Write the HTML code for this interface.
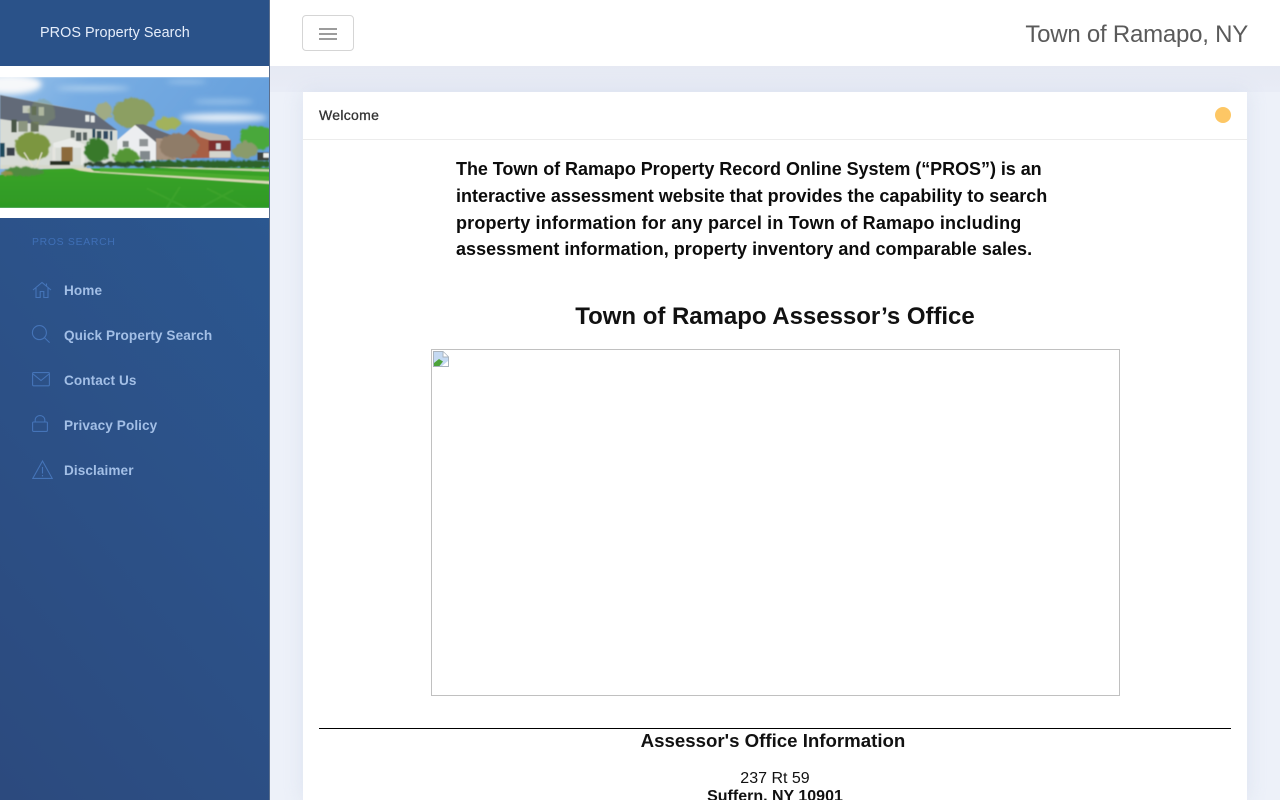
<!DOCTYPE html>
<html lang="en">
<head>
<meta charset="utf-8">
<title>PROS Property Search</title>
<style>
*{box-sizing:border-box}
html,body{margin:0;padding:0;width:1280px;height:800px;overflow:hidden;background:#edf1f9;font-family:"Liberation Sans",sans-serif}
#wrap{position:relative;width:1280px;height:800px;overflow:hidden}
.abs{position:absolute;white-space:nowrap}
#side{position:absolute;left:0;top:0;width:270px;height:800px;background:linear-gradient(50deg,#2c4a7e 0%,#2b5a94 100%);border-right:1px solid #5b6f8d}
#head{position:absolute;left:0;top:0;width:269px;height:66px;background:#2a5289}
#band{position:absolute;left:0;top:66px;width:269px;height:152px;background:#fff}
#top{position:absolute;left:270px;top:0;width:1010px;height:66px;background:#fff}
#shadow{position:absolute;left:270px;top:66px;width:1010px;height:26px;background:linear-gradient(#e6e9f3,#e8ecf6)}
#card{position:absolute;left:303px;top:92px;width:944px;height:708px;background:#fff;box-shadow:0 0 18px rgba(200,208,228,.45)}
.nav{position:absolute;left:64px;color:#a3bfe6;font-size:13.6px;font-weight:bold;white-space:nowrap;letter-spacing:.08px}
.p{position:absolute;left:456px;font-size:18px;font-weight:bold;color:#0c0c0c;white-space:nowrap}
svg.i{position:absolute;fill:none;stroke:#4574b8;stroke-width:1.1}
</style>
</head>
<body>
<div id="wrap">
<div id="side"></div>
<div id="head"></div>
<div class="abs" style="left:40px;top:25px;font-size:14.4px;color:#e6eefb;letter-spacing:.05px">PROS Property Search</div>
<div id="band"></div>
<svg style="position:absolute;left:0;top:75px" width="269" height="135" viewBox="0 0 807 405">
<defs>
<linearGradient id="sky" x1="0" y1="0" x2="1" y2=".4"><stop offset="0" stop-color="#9cc4ea"/><stop offset=".3" stop-color="#78ade3"/><stop offset="1" stop-color="#659fdc"/></linearGradient>
<linearGradient id="grass" x1="0" y1="0" x2="0" y2="1"><stop offset="0" stop-color="#3ba328"/><stop offset="1" stop-color="#2e9a24"/></linearGradient>
<filter id="all" x="0" y="0" width="100%" height="100%"><feGaussianBlur stdDeviation="1.2"/></filter>
<filter id="b1" x="-5%" y="-5%" width="110%" height="110%"><feGaussianBlur stdDeviation="1"/></filter>
<filter id="b2" x="-30%" y="-100%" width="160%" height="300%"><feGaussianBlur stdDeviation="9"/></filter>
<filter id="tree" x="-20%" y="-20%" width="140%" height="140%"><feTurbulence type="fractalNoise" baseFrequency=".07" numOctaves="2" seed="4"/><feDisplacementMap in="SourceGraphic" scale="16"/><feGaussianBlur stdDeviation="1.2"/></filter>
</defs>
<g filter="url(#all)">
<rect x="-4" y="6" width="815" height="393" fill="url(#sky)"/>
<g filter="url(#b2)">
<ellipse cx="30" cy="28" rx="95" ry="30" fill="#f6f8fa"/>
<ellipse cx="670" cy="128" rx="130" ry="13" fill="#e6eff8"/>
<ellipse cx="280" cy="40" rx="110" ry="6" fill="#bcd8f0"/>
<ellipse cx="670" cy="80" rx="90" ry="6" fill="#a3c9ec"/>
<ellipse cx="560" cy="20" rx="60" ry="5" fill="#a3c9ec"/>
</g>
<g filter="url(#tree)">
<ellipse cx="400" cy="115" rx="62" ry="46" fill="#8c9f62"/>
<ellipse cx="312" cy="108" rx="24" ry="26" fill="#a0ab84"/>
<ellipse cx="505" cy="146" rx="38" ry="20" fill="#a2b25c"/>
<ellipse cx="772" cy="188" rx="54" ry="36" fill="#4aa83b"/>
<ellipse cx="735" cy="226" rx="38" ry="26" fill="#8a9b6c"/>
</g>
<g filter="url(#b1)">
<polygon points="0,60 40,68 280,112 352,168 352,262 240,275 0,275" fill="#d8dcd6"/>
<polygon points="0,60 120,84 280,112 352,166 240,160 120,150 0,132" fill="#626b78"/>
<rect x="68" y="92" width="22" height="22" fill="#c4c9bd"/><rect x="95" y="94" width="14" height="26" fill="#4d5a4b"/><rect x="116" y="96" width="16" height="26" fill="#c0c6bd"/>
<rect x="256" y="120" width="12" height="20" fill="#e6e9e6"/><rect x="272" y="122" width="12" height="20" fill="#e6e9e6"/>
<rect x="34" y="134" width="16" height="38" fill="#495746"/><rect x="55" y="138" width="28" height="32" fill="#8c9680"/><rect x="92" y="140" width="24" height="30" fill="#66715a"/>
<rect x="212" y="166" width="12" height="22" fill="#68716c"/><rect x="228" y="172" width="16" height="26" fill="#535e5f"/><rect x="249" y="172" width="12" height="24" fill="#56605f"/>
<rect x="277" y="162" width="9" height="26" fill="#25485c"/><rect x="290" y="168" width="14" height="22" fill="#354e55"/><rect x="310" y="168" width="14" height="24" fill="#2e4a60"/><rect x="330" y="168" width="7" height="28" fill="#1f4a66"/>
<rect x="0" y="204" width="14" height="42" fill="#1f4a5c"/><rect x="20" y="218" width="24" height="24" fill="#39404a"/>
<polygon points="160,204 210,190 252,208 252,218 160,218" fill="#e9ebe8"/>
<rect x="184" y="216" width="34" height="44" fill="#8c6a3a"/>
<rect x="157" y="216" width="10" height="44" fill="#e4e4df"/><rect x="243" y="208" width="11" height="66" fill="#e8e8e3"/>
<rect x="150" y="258" width="60" height="20" fill="#262e22"/>
<polygon points="352,195 405,150 468,200 468,258 352,258" fill="#eceef0"/>
<polygon points="405,148 430,148 540,190 468,202" fill="#696b70"/>
<rect x="418" y="192" width="26" height="22" fill="#8f9496"/><rect x="368" y="198" width="18" height="18" fill="#7d8683"/><rect x="420" y="228" width="30" height="26" fill="#81898d"/>
<rect x="468" y="190" width="60" height="65" fill="#a7927f"/>
<polygon points="548,186 572,162 620,186 692,194 692,248 548,250" fill="#a85f45"/>
<polygon points="572,160 620,172 680,182 692,196 630,196 600,186" fill="#bfb8ae"/>
<rect x="626" y="196" width="66" height="34" fill="#7e2f2f"/><rect x="648" y="205" width="14" height="18" fill="#cfd7d8"/>
<rect x="628" y="228" width="64" height="20" fill="#d5d5cd"/>
<rect x="772" y="232" width="35" height="24" fill="#3b3f3a"/><rect x="790" y="234" width="17" height="14" fill="#eef0ee"/>
<rect x="0" y="270" width="260" height="12" fill="#d6d8cc"/>
</g>
<g filter="url(#tree)">
<ellipse cx="125" cy="112" rx="40" ry="40" fill="#8c9c66" opacity=".35"/>
<ellipse cx="98" cy="214" rx="54" ry="42" fill="#7b9640"/>
<ellipse cx="290" cy="226" rx="36" ry="36" fill="#37792c"/>
<ellipse cx="378" cy="246" rx="38" ry="24" fill="#559636"/>
<ellipse cx="538" cy="214" rx="60" ry="38" fill="#8f7c68"/>
<rect x="430" y="257" width="377" height="22" rx="6" fill="#2d642a"/>
<rect x="345" y="262" width="90" height="12" fill="#2b4f2b"/>
<rect x="250" y="262" width="100" height="12" fill="#2e4630"/>
</g>
<path d="M72 232L98 274M126 232L110 274" stroke="#e3e0d0" stroke-width="4" fill="none"/>
<polygon points="-4,300 130,282 230,280 811,278 811,399 -4,399" fill="url(#grass)"/>
<g filter="url(#tree)">
<ellipse cx="72" cy="290" rx="60" ry="13" fill="#4f8a3f"/>
<ellipse cx="20" cy="295" rx="18" ry="7" fill="#95904c"/>
</g>
<g filter="url(#b1)">
<polygon points="215,280 270,279 282,288 811,318 811,327 275,292 240,287" fill="#dcd9b8"/>
<polygon points="440,275 811,283 811,290 520,280" fill="#c8d0aa"/>
<path d="M300 284L811 312" stroke="#5db83a" stroke-width="14" fill="none" opacity=".5"/>
<path d="M540 335L500 399M620 340L740 399M700 345L600 399M440 340L560 399" stroke="#4fb034" stroke-width="7" fill="none" opacity=".3"/>
</g>
</g>
<rect x="0" y="0" width="807" height="6" fill="#fff"/>
<rect x="0" y="399" width="807" height="6" fill="#fff"/>
</svg>

<div class="abs" style="left:32px;top:237px;font-size:10.4px;letter-spacing:.72px;color:#3f6fb6">PROS SEARCH</div>

<svg class="i" style="left:32px;top:281px" width="20" height="18" viewBox="0 0 20 18"><path d="M1 9L10 1.5L19 9M4 7v9.5h4.2v-6h3.6v6H16V7M14.5 2.5v3"/></svg>
<svg class="i" style="left:31px;top:325px" width="19" height="18" viewBox="0 0 19 18"><circle cx="8.4" cy="7.6" r="7"/><path d="M13.4 12.6L18.6 17.6"/></svg>
<svg class="i" style="left:32px;top:372px" width="18" height="15" viewBox="0 0 18 15"><rect x=".6" y=".6" width="16.8" height="13.2" rx="1"/><path d="M1 2L9 8.5L17 2"/></svg>
<svg class="i" style="left:32px;top:415px" width="16" height="17" viewBox="0 0 16 17"><rect x=".6" y="7" width="14.8" height="9.4" rx="1"/><path d="M3.2 7V5a4.8 4.4 0 0 1 9.6 0V7"/></svg>
<svg class="i" style="left:32px;top:460px" width="21" height="19" viewBox="0 0 21 19"><path d="M10.5 1L20.2 18.4H.8zM10.5 7v6.5M10.5 15v1.4"/></svg>

<div class="nav" style="top:283px">Home</div>
<div class="nav" style="top:328px">Quick Property Search</div>
<div class="nav" style="top:373px">Contact Us</div>
<div class="nav" style="top:418px">Privacy Policy</div>
<div class="nav" style="top:463px">Disclaimer</div>

<div id="top"></div>
<div id="shadow"></div>
<div style="position:absolute;left:302px;top:15px;width:52px;height:36px;border:1px solid #d5d5d5;border-radius:4px;background:#fff"></div>
<div style="position:absolute;left:319px;top:28px;width:18px;height:2px;background:#9c9c9c"></div>
<div style="position:absolute;left:319px;top:33px;width:18px;height:2px;background:#9c9c9c"></div>
<div style="position:absolute;left:319px;top:38px;width:18px;height:2px;background:#9c9c9c"></div>
<div class="abs" style="right:32px;top:21px;font-size:24px;color:#5a5a5a;letter-spacing:-.23px">Town of Ramapo, NY</div>

<div id="card"></div>
<div style="position:absolute;left:303px;top:139px;width:944px;height:1px;background:#ececec"></div>
<div class="abs" style="left:319px;top:107px;font-size:14px;color:#333;-webkit-text-stroke:.3px #333;letter-spacing:.3px">Welcome</div>
<div style="position:absolute;left:1215px;top:107px;width:16px;height:16px;border-radius:50%;background:#fdc765"></div>

<div class="p" style="top:159px;letter-spacing:-.05px">The Town of Ramapo Property Record Online System (“PROS”) is an</div>
<div class="p" style="top:186px;letter-spacing:-.015px">interactive assessment website that provides the capability to search</div>
<div class="p" style="top:213px;letter-spacing:.17px">property information for any parcel in Town of Ramapo including</div>
<div class="p" style="top:239px;letter-spacing:.03px">assessment information, property inventory and comparable sales.</div>

<div class="abs" style="left:303px;width:944px;text-align:center;top:303px;font-size:24px;font-weight:bold;color:#111;letter-spacing:-.02px">Town of Ramapo Assessor’s Office</div>

<div style="position:absolute;left:431px;top:349px;width:689px;height:347px;border:1px solid #c0c0c0;background:#fff"></div>
<svg style="position:absolute;left:433px;top:351px" width="16" height="16" viewBox="0 0 16 16">
<path d="M.5.5H10L15.5 6V15.5H.5z" fill="#fff" stroke="#a9b3bd"/>
<path d="M1 1H9.5V6.5H15V10L9 15H1z" fill="#c4d9f2"/>
<path d="M1 15V12L6 8L10 10.5L6.5 15z" fill="#4da33a"/>
<path d="M10 .8V6H15.2" fill="#fff" stroke="#a9b3bd"/>
</svg>

<div style="position:absolute;left:319px;top:728px;width:912px;height:1px;background:#000"></div>
<div class="abs" style="left:319px;width:908px;text-align:center;top:730px;font-size:18.66px;font-weight:bold;color:#111">Assessor's Office Information</div>
<div class="abs" style="left:319px;width:912px;text-align:center;top:770px;font-size:16px;color:#111">237 Rt 59</div>
<div class="abs" style="left:319px;width:912px;text-align:center;top:788px;font-size:16px;font-weight:bold;color:#111">Suffern, NY 10901</div>
</div>
</body>
</html>
